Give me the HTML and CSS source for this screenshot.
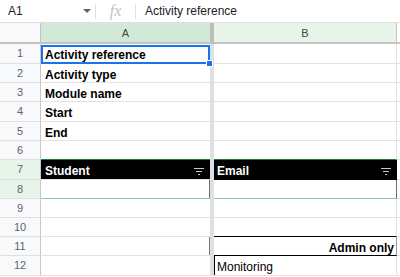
FILE: index.html
```html
<!DOCTYPE html>
<html lang="en">
<head>
    <meta charset="UTF-8">
    <title>Sheet</title>
    <link rel="stylesheet" href="styles.css">
</head>
<body>
    <div class="formula-bar">
        <div class="name-box">A1</div>
        <div class="caret">
            <svg width="8" height="4" viewBox="0 0 8 4"><path d="M0 0 H8 L4 4 Z" fill="#5f6368"/></svg>
        </div>
        <div class="sep"></div>
        <div class="fx">fx</div>
        <div class="sep"></div>
        <div class="formula">Activity reference</div>
    </div>

    <div class="sheet">
        <div class="row head">
            <div class="rh corner"></div>
            <div class="ca col-a">A</div>
            <div class="fz"></div>
            <div class="cb col-b">B</div>
            <div class="cc"></div>
        </div>

        <div class="row tall">
            <div class="rh">1</div>
            <div class="ca bold">Activity reference
                <div class="sel"><span class="handle"></span></div>
            </div>
            <div class="fz"></div>
            <div class="cb"></div>
            <div class="cc"></div>
        </div>
        <div class="row">
            <div class="rh">2</div>
            <div class="ca bold">Activity type</div>
            <div class="fz"></div>
            <div class="cb"></div>
            <div class="cc"></div>
        </div>
        <div class="row">
            <div class="rh">3</div>
            <div class="ca bold">Module name</div>
            <div class="fz"></div>
            <div class="cb"></div>
            <div class="cc"></div>
        </div>
        <div class="row tall">
            <div class="rh">4</div>
            <div class="ca bold">Start</div>
            <div class="fz"></div>
            <div class="cb"></div>
            <div class="cc"></div>
        </div>
        <div class="row">
            <div class="rh">5</div>
            <div class="ca bold">End</div>
            <div class="fz"></div>
            <div class="cb"></div>
            <div class="cc"></div>
        </div>
        <div class="row before-table">
            <div class="rh">6</div>
            <div class="ca"></div>
            <div class="fz"></div>
            <div class="cb"></div>
            <div class="cc"></div>
        </div>

        <!-- table header -->
        <div class="row tall table-head">
            <div class="rh picked">7</div>
            <div class="ca">
                <span>Student</span>
                <svg class="filter" width="10" height="7" viewBox="0 0 10 7"><path d="M0 0.5 H10 M2 3.5 H8 M4 6.5 H6" stroke="#c8c8c8" stroke-width="1"/></svg>
            </div>
            <div class="fz"></div>
            <div class="cb">
                <span>Email</span>
                <svg class="filter" width="10" height="7" viewBox="0 0 10 7"><path d="M0 0.5 H10 M2 3.5 H8 M4 6.5 H6" stroke="#c8c8c8" stroke-width="1"/></svg>
            </div>
            <div class="cc"></div>
        </div>
        <div class="row table-body">
            <div class="rh picked">8</div>
            <div class="ca"></div>
            <div class="fz"></div>
            <div class="cb"></div>
            <div class="cc"></div>
        </div>

        <div class="row">
            <div class="rh">9</div>
            <div class="ca"></div>
            <div class="fz"></div>
            <div class="cb"></div>
            <div class="cc"></div>
        </div>
        <div class="row above-admin">
            <div class="rh">10</div>
            <div class="ca"></div>
            <div class="fz"></div>
            <div class="cb"></div>
            <div class="cc"></div>
        </div>
        <div class="row admin">
            <div class="rh">11</div>
            <div class="ca"></div>
            <div class="fz"></div>
            <div class="cb bold">Admin only</div>
            <div class="cc"></div>
        </div>
        <div class="row tall monitor">
            <div class="rh">12</div>
            <div class="ca"></div>
            <div class="fz"></div>
            <div class="cb">Monitoring</div>
            <div class="cc"></div>
        </div>
    </div>
</body>
</html>
```

FILE: styles.css
```css
* {
    box-sizing: border-box;
}
body {
    margin: 0;
    font-family: 'Liberation Sans', Arial, sans-serif;
    font-size: 12px;
    color: #000;
    background: #fff;
    overflow: hidden;
}

/* formula bar */
.formula-bar {
    display: flex;
    align-items: center;
    height: 23px;
    border-bottom: 1px solid #e0e0e0;
    color: #202124;
}
.name-box {
    width: 81px;
    padding-left: 8px;
}
.caret {
    width: 14px;
    display: flex;
    align-items: center;
    padding-left: 2px;
}
.sep {
    width: 1px;
    height: 15px;
    background: #e0e0e0;
}
.fx {
    width: 39px;
    text-align: center;
    font-family: 'Liberation Serif', serif;
    font-style: italic;
    font-size: 16px;
    color: #c4c4c4;
}
.formula {
    padding-left: 9px;
}

/* grid */
.row {
    display: flex;
    height: 19px;
}
.row.tall {
    height: 20px;
}
.rh {
    width: 41px;
    background: #f8f9fa;
    border-right: 1px solid #c7c7c7;
    border-bottom: 1px solid #e0e0e0;
    text-align: center;
    font-size: 11px;
    color: #5f6368;
    padding-top: 3px;
}
.ca {
    position: relative;
    width: 169px;
    border-bottom: 1px solid #e2e2e2;
    padding: 3px 4px 0;
    line-height: 16px;
    white-space: nowrap;
}
.fz {
    width: 4px;
    background: #dde1e6;
}
.cb {
    width: 183px;
    border-bottom: 1px solid #e2e2e2;
    border-right: 1px solid #e2e2e2;
    padding: 3px 3px 0;
    line-height: 16px;
    white-space: nowrap;
}
.cc {
    flex: 1;
    border-bottom: 1px solid #e2e2e2;
}
.bold {
    font-weight: bold;
}

/* column header */
.row.head {
    height: 21px;
}
.row.head .ca,
.row.head .cb {
    text-align: center;
    font-size: 11px;
    color: #444;
    padding-top: 2px;
    border-bottom: 2px solid #c4c4c4;
}
.corner {
    border-bottom: 2px solid #c4c4c4;
    border-right: 1px solid #c4c4c4;
}
.col-a {
    background: #d3e9d8;
}
.col-b {
    background: #e6f4ea;
    border-right-color: #c4c4c4;
}
.row.head .fz {
    background: #bdbdbd;
}
.row.head .cc {
    border-bottom: 2px solid #c4c4c4;
}

/* selected cell */
.sel {
    position: absolute;
    left: 0;
    top: 1px;
    right: 0;
    bottom: -1px;
    border: 2px solid #1a73e8;
}
.handle {
    position: absolute;
    right: -5px;
    bottom: -5px;
    width: 7px;
    height: 7px;
    background: #1a73e8;
    border: 1px solid #fff;
}

/* table block */
.before-table .ca,
.before-table .cb {
    border-bottom-color: #188038;
}
.rh.picked {
    background: #e6f4ea;
}
.table-head .ca,
.table-head .cb {
    background: #000;
    color: #fff;
    font-weight: bold;
    display: flex;
    justify-content: space-between;
    align-items: flex-start;
}
.table-head .ca {
    padding-right: 6px;
}
.table-head .cb {
    padding-right: 5px;
    border-bottom-color: #000;
    border-right-color: #000;
}
.filter {
    margin-top: 5px;
}
.table-body .ca {
    border-bottom-color: #93c69f;
    box-shadow: inset -1px 0 0 #6e6e6e;
}
.table-body .cb {
    border-bottom-color: #93c69f;
    border-right-color: #6e6e6e;
}

/* admin block */
.above-admin .cb {
    border-bottom-color: #000;
}
.admin .ca {
    box-shadow: inset -1px 0 0 #7a7a7a;
}
.admin .cb {
    text-align: right;
    padding-right: 2px;
    border-bottom-color: #000;
    border-right-color: #9a9a9a;
}
.monitor .cb {
    box-shadow: inset 1px 0 0 #000;
}
```
